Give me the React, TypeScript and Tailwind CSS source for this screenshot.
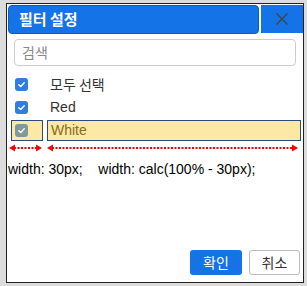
import React from 'react';

const font = { fontFamily: '"Noto Sans CJK KR", "Liberation Sans", Arial, sans-serif' };

const Check = ({ color }: { color: string }) => (
  <span className={`flex items-center justify-center w-[13px] h-[13px] rounded-[3px] ${color}`}>
    <svg width="9" height="9" viewBox="0 0 10 10" fill="none">
      <path d="M2 5.2 L4.2 7.2 L8 3" stroke="white" strokeWidth="1.6" strokeLinecap="round" strokeLinejoin="round" />
    </svg>
  </span>
);

const Arrow = ({ width }: { width: number }) => (
  <svg width={width} height="8" viewBox={`0 0 ${width} 8`}>
    <line x1="5" y1="4" x2={width - 5} y2="4" stroke="#f00" strokeWidth="2" strokeDasharray="2 1.5" />
    <path d="M0 4 L6 0.5 L6 7.5 Z" fill="#f00" />
    <path d={`M${width} 4 L${width - 6} 0.5 L${width - 6} 7.5 Z`} fill="#f00" />
  </svg>
);

export default function App() {
  return (
    <div className="w-[307px] h-[286px] bg-[#dcdcdc] pt-[3px] pl-[6px]" style={font}>
      <div className="w-[298px] h-[280px] bg-white border border-[#222] flex flex-col">
        <div className="flex pt-[1px] pl-[1px]">
          <div className="w-[252px] h-[29px] bg-[#1473e6] rounded-[4px] border border-[#0f5cc0] flex items-center pl-[10px] text-white font-bold text-[15px]">
            필터 설정
          </div>
          <div className="ml-[2px] w-[42px] h-[28px] bg-[#1473e6] flex items-center justify-center">
            <svg width="14" height="14" viewBox="0 0 14 14">
              <path d="M1.5 1.5 L12.5 12.5 M12.5 1.5 L1.5 12.5" stroke="#444" strokeWidth="1.3" />
            </svg>
          </div>
        </div>
        <div className="mx-[7px] mt-[5px] h-[27px] border border-[#ccc] rounded-[4px] flex items-center pl-[7px] text-[14px] text-[#888]">
          검색
        </div>
        <div className="flex items-center h-[22px] mt-[7px] pl-[8px] text-[14px] text-[#333]">
          <Check color="bg-[#2f7de1]" />
          <span className="ml-[22px]">모두 선택</span>
        </div>
        <div className="flex items-center h-[22px] mt-[1px] pl-[8px] text-[14px] text-[#333]" style={{ fontFamily: '"Liberation Sans", Arial, sans-serif' }}>
          <Check color="bg-[#2f7de1]" />
          <span className="ml-[22px]">Red</span>
        </div>
        <div className="flex h-[21px] mt-[2px] pl-[4px]">
          <div className="w-[32px] h-[21px] bg-[#fde9a6] border border-[#2e4a7d] flex items-center pl-[3px]">
            <Check color="bg-[#7f9a9c]" />
          </div>
          <div className="ml-[4px] w-[254px] h-[21px] bg-[#fde9a6] border border-[#2e4a7d] flex items-center pl-[3px] text-[14px] text-[#8a6a1a]" style={{ fontFamily: '"Liberation Sans", Arial, sans-serif' }}>
            White
          </div>
        </div>
        <div className="flex mt-[3px] pl-[2px]">
          <Arrow width={33} />
          <div className="ml-[5px]">
            <Arrow width={251} />
          </div>
        </div>
        <div className="mt-[7px] pl-[1px] text-[14px] text-black whitespace-pre" style={{ fontFamily: '"Liberation Sans", Arial, sans-serif' }}>
          width: 30px;    width: calc(100% - 30px);
        </div>
        <div className="flex-1" />
        <div className="flex justify-end gap-[7px] pr-[3px] mb-[7px]">
          <div className="w-[52px] h-[25px] bg-[#1473e6] rounded-[3px] text-white text-[14px] flex items-center justify-center">확인</div>
          <div className="w-[51px] h-[25px] bg-white border border-[#bbb] rounded-[3px] text-[#333] text-[14px] flex items-center justify-center">취소</div>
        </div>
      </div>
    </div>
  );
}
